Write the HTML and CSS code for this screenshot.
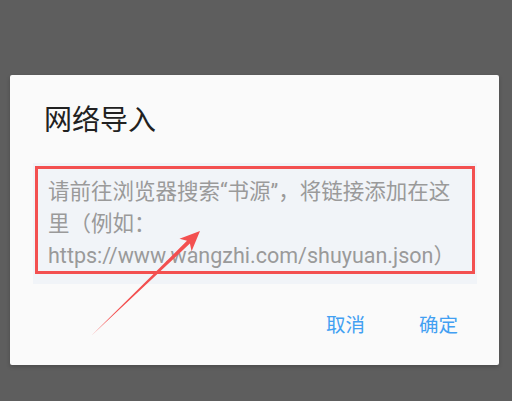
FILE: index.html
```html
<!DOCTYPE html>
<html lang="zh-CN">
<head>
<meta charset="utf-8">
<link rel="stylesheet" href="styles.css">
</head>
<body>
<div class="dialog">
  <div class="title">网络导入</div>
  <div class="field">
    <div class="placeholder">请前往浏览器搜索“书源”，将链接添加在这里（例如：<span class="url">https://www.wangzhi.com/shuyuan.json）</span></div>
    <div class="mark"></div>
  </div>
  <div class="actions">
    <span class="btn">取消</span>
    <span class="btn">确定</span>
  </div>
</div>
<svg class="arrow" width="512" height="401" viewBox="0 0 512 401">
  <polygon points="200,231 179.5,238.8 187,240.8 91,336 189.9,243.6 191.6,251.2" fill="#f35050"/>
</svg>
</body>
</html>
```
FILE: styles.css
```css
html, body {
  margin: 0;
  padding: 0;
}
body {
  width: 512px;
  height: 401px;
  overflow: hidden;
  background: #5e5e5e;
  font-family: Roboto, "Noto Sans CJK SC", sans-serif;
  position: relative;
}
.dialog {
  margin: 75px 0 0 10px;
  width: 489px;
  background: #fafafa;
  border-radius: 2px;
  box-shadow: 0 2px 4px rgba(0,0,0,0.2);
  padding-top: 28px;
  box-sizing: border-box;
}
.title {
  font-size: 28px;
  line-height: 36px;
  color: #212121;
  margin-left: 34px;
  margin-bottom: 24px;
}
.field {
  position: relative;
  margin: 0 22px 0 23px;
  background: #f1f4f8;
  padding: 13px 12px 12px 15px;
}
.placeholder {
  font-size: 21.5px;
  line-height: 32px;
  color: #9a9a9a;
}
.url {
  white-space: nowrap;
}
.mark {
  position: absolute;
  left: 2px;
  top: 3px;
  right: 2px;
  bottom: 10px;
  border: 3px solid #f35050;
}
.actions {
  display: flex;
  justify-content: flex-end;
  gap: 54px;
  margin-top: 30px;
  padding: 0 41px 27px 0;
}
.btn {
  font-size: 19.5px;
  line-height: 24px;
  color: #42a0f2;
}
.arrow {
  position: absolute;
  left: 0;
  top: 0;
  pointer-events: none;
}
```
